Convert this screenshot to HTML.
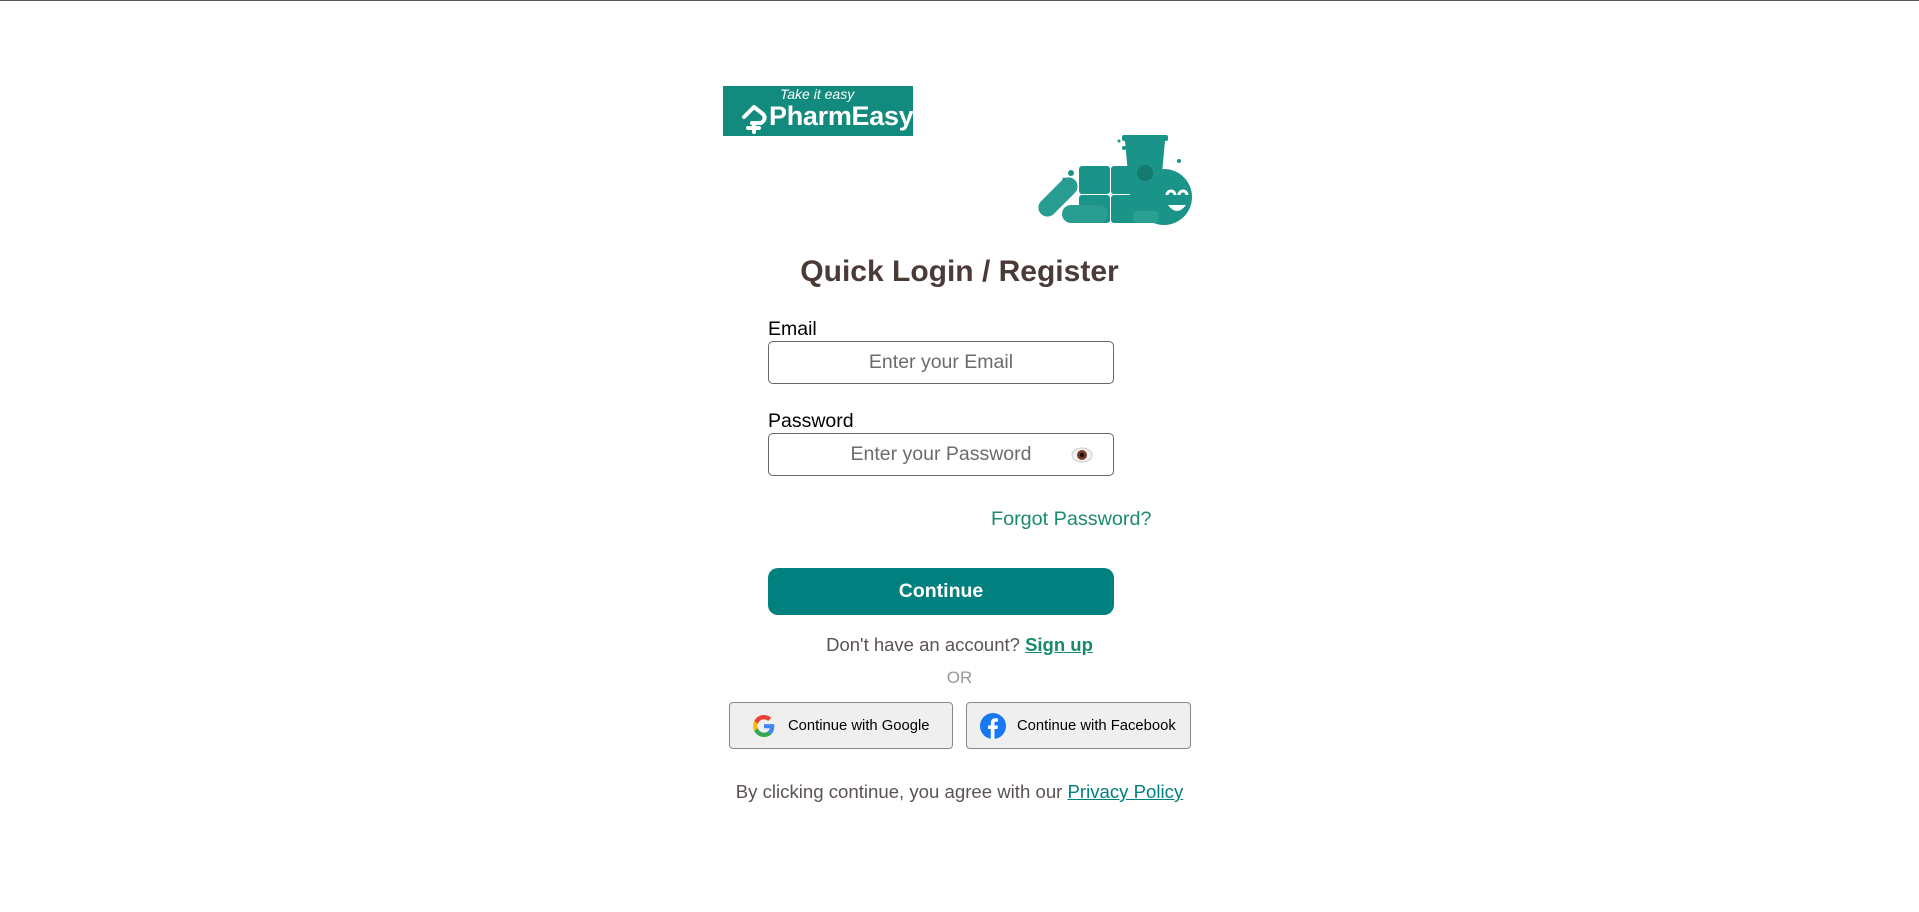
<!DOCTYPE html>
<html><head><meta charset="utf-8"><style>
*{box-sizing:border-box;margin:0;padding:0}
html,body{width:1919px;height:912px;background:#fff;font-family:"Liberation Sans",Arial,sans-serif;overflow:hidden;position:relative}
.top{position:absolute;left:0;top:0;width:1919px;height:1px;background:#555}
.a{position:absolute}
.logo{left:723px;top:86px;width:190px;height:50px;background:#138a7e;color:#fff;overflow:hidden}
h1{position:absolute;left:0;width:1919px;text-align:center;top:255px;font-size:30px;color:#4a3b36;font-weight:bold}
.lbl{font-size:19.5px;color:#000;left:768px}
.inp{left:768px;width:346px;height:43px;border:1px solid #666;border-radius:5px;text-align:center;font-size:19.5px;color:#6b6b6b;line-height:41px}
.btn{left:768px;top:568px;width:346px;height:47px;background:#00807f;border-radius:10px;color:#fff;font-weight:bold;font-size:19.5px;text-align:center;line-height:47px}
.c{left:0;width:1919px;text-align:center}
.sb{top:702px;height:47px;background:#efefef;border:1px solid #888;border-radius:4px;font-size:14.5px;color:#000;display:flex;align-items:center}
</style></head><body>
<div class="top"></div>
<div class="a logo">
<div class="a" style="left:57px;top:0;font-size:14px;font-style:italic">Take it easy</div>
<svg class="a" style="left:18px;top:16px" width="28" height="34" viewBox="0 0 28 34"><path d="M3 15 L13 5 L22 12 Q26 17 20 21 L11 21 M13 21 L13 30 M7 26 L18 26" stroke="#fff" stroke-width="4" fill="none" stroke-linecap="round" stroke-linejoin="round"/></svg>
<div class="a" style="left:46px;top:15px;font-size:27px;font-weight:bold;letter-spacing:-0.3px">PharmEasy</div>
</div>
<svg class="a" style="left:1034px;top:135px" width="165" height="90" viewBox="0 0 165 90">
<g fill="#1a9388">
<rect x="88" y="0" width="46" height="6" rx="2"/>
<path d="M91 6 H131 L126 60 H96 Z"/>
<rect x="45" y="31" width="31" height="28" rx="3"/><rect x="77" y="31" width="30" height="28" rx="3"/>
<rect x="45" y="60" width="31" height="28" rx="3"/><rect x="77" y="60" width="30" height="28" rx="3"/>
<circle cx="130" cy="62" r="28"/>
<rect x="-24" y="-9" width="48" height="18" rx="9" transform="translate(24 62) rotate(-45)" fill="#2a9d92"/>
<rect x="28" y="70" width="46" height="18" rx="9" fill="#2a9d92"/>
<rect x="99" y="76" width="26" height="12" rx="4" fill="#2aa093"/>
<circle cx="85" cy="6" r="1.5"/><circle cx="90" cy="13" r="2"/><circle cx="145" cy="26" r="2"/><circle cx="37" cy="38" r="3"/><circle cx="30" cy="44" r="1.5"/>
</g>
<circle cx="111" cy="38" r="8" fill="#137a70"/>
<path d="M133 60 a4 4 0 0 1 8 0 M145 60 a4 4 0 0 1 8 0" stroke="#fff" stroke-width="3" fill="none"/>
<path d="M134 70 Q143 82 152 70 Z" fill="#fff"/>
</svg>
<h1>Quick Login / Register</h1>
<div class="a lbl" style="top:318px">Email</div>
<div class="a inp" style="top:341px">Enter your Email</div>
<div class="a lbl" style="top:410px">Password</div>
<div class="a inp" style="top:433px">Enter your Password</div>
<svg class="a" style="left:1071px;top:445px" width="22" height="20" viewBox="0 0 22 20"><ellipse cx="11" cy="10" rx="10" ry="7" fill="#f2f2f2" stroke="#ccc"/><circle cx="11" cy="10" r="5" fill="#7a3b22"/><circle cx="11" cy="10" r="2.2" fill="#111"/></svg>
<div class="a" style="left:991px;top:508px;font-size:19.8px;color:#1a8a6e">Forgot Password?</div>
<div class="a btn">Continue</div>
<div class="a c" style="top:634px;font-size:18.5px;color:#5b5352">Don't have an account? <b style="color:#168a6a;text-decoration:underline">Sign up</b></div>
<div class="a c" style="top:668px;font-size:17px;color:#999">OR</div>
<div class="a sb" style="left:729px;width:224px">
<svg style="margin-left:23px" width="22" height="22" viewBox="0 0 48 48"><path fill="#EA4335" d="M24 9.5c3.5 0 6.6 1.2 9.1 3.6l6.8-6.8C35.8 2.4 30.3 0 24 0 14.6 0 6.6 5.4 2.7 13.3l7.9 6.1C12.5 13.7 17.8 9.5 24 9.5z"/><path fill="#4285F4" d="M46.5 24.5c0-1.6-.1-3.1-.4-4.5H24v9h12.7c-.6 3-2.3 5.5-4.8 7.2l7.7 6c4.5-4.2 6.9-10.4 6.9-17.7z"/><path fill="#FBBC05" d="M10.5 28.6c-.5-1.4-.8-3-.8-4.6s.3-3.2.8-4.6l-7.9-6.1C1 16.6 0 20.2 0 24s1 7.4 2.7 10.7l7.8-6.1z"/><path fill="#34A853" d="M24 48c6.5 0 11.9-2.1 15.9-5.8l-7.7-6c-2.1 1.4-4.9 2.3-8.2 2.3-6.2 0-11.5-4.2-13.4-9.9l-7.9 6.1C6.6 42.6 14.6 48 24 48z"/></svg>
<span style="margin-left:13px;font-size:14.8px">Continue with Google</span></div>
<div class="a sb" style="left:966px;width:225px">
<svg style="margin-left:13px" width="26" height="26" viewBox="0 0 26 26"><circle cx="13" cy="13" r="13" fill="#1877f2"/><path d="M14.5 26V16h3l.5-3.5h-3.5v-2.2c0-1 .3-1.7 1.8-1.7H18V5.5c-.3 0-1.4-.2-2.7-.2-2.7 0-4.5 1.6-4.5 4.6v2.6H8V16h2.8v10z" fill="#fff"/></svg>
<span style="margin-left:11px;font-size:14.8px">Continue with Facebook</span></div>
<div class="a c" style="top:781px;font-size:18.6px;color:#5b5352">By clicking continue, you agree with our <span style="color:#00807f;text-decoration:underline">Privacy Policy</span></div>
</body></html>
